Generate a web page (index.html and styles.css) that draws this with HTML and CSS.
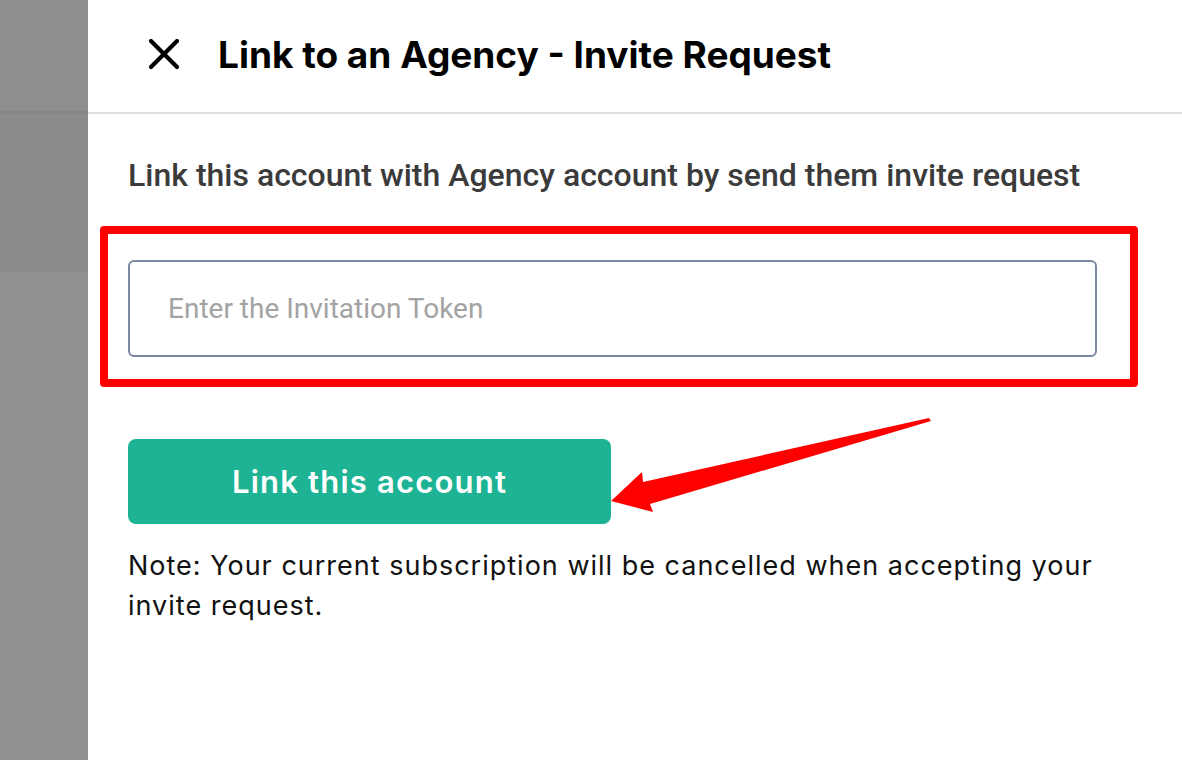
FILE: index.html
```html
<!DOCTYPE html>
<html>
<head>
<meta charset="utf-8">
<link rel="stylesheet" href="styles.css">
</head>
<body>
<div class="page">
  <aside class="backdrop">
    <div class="bd-top"></div>
    <div class="bd-mid"></div>
    <div class="bd-rest"></div>
  </aside>
  <main class="panel">
    <header class="panel-head">
      <button class="close" aria-label="Close">
        <svg width="32" height="32" viewBox="0 0 32 32"><path d="M3 3 L29 29 M29 3 L3 29" stroke="#000" stroke-width="4.2" stroke-linecap="round" fill="none"/></svg>
      </button>
      <h1 class="title">Link to an Agency - Invite Request</h1>
    </header>
    <section class="panel-body">
      <p class="lead">Link this account with Agency account by send them invite request</p>
      <div class="highlight">
        <input class="token" type="text" placeholder="Enter the Invitation Token">
      </div>
      <button class="primary">Link this account</button>
      <p class="note">Note: Your current subscription will be cancelled when accepting your invite request.</p>
    </section>
    <svg class="arrow" width="1182" height="760" viewBox="0 0 1182 760">
      <polygon points="611,501 642,472 643,482 929,418 931,421 650,504 653,512" fill="#ff0000"/>
    </svg>
  </main>
</div>
</body>
</html>
```

FILE: styles.css
```css
* { box-sizing: border-box; }
html, body { margin: 0; padding: 0; background: #fff; }
.page { display: flex; width: 1182px; height: 760px; overflow: hidden; }
.backdrop { width: 88px; flex: none; display: flex; flex-direction: column; }
.bd-top { height: 113px; background: #8e8e8e; border-bottom: 2px solid #858585; flex: none; }
.bd-mid { height: 159px; background: #8b8b8b; flex: none; }
.bd-rest { flex: 1; background: #909090; }
.panel { flex: 1; background: #fff; }
.panel-head { height: 114px; border-bottom: 2px solid #dde1e6; display: flex; align-items: center; padding-left: 58px; gap: 36px; padding-bottom: 4px; }
.close { border: 0; background: none; padding: 0; width: 36px; height: 36px; display: flex; align-items: center; justify-content: center; cursor: pointer; }
.title { margin: 0; font-family: "Inter", sans-serif; font-weight: 700; font-size: 37px; color: #000; letter-spacing: 0; }
.panel-body { padding: 40px 0 0 40px; }
.lead { margin: 0; font-family: "Roboto", sans-serif; font-weight: 500; font-size: 32px; color: #3b3b3b; line-height: 42px; }
.highlight { margin: 30px 0 0 -28px; width: 1038px; border: 8px solid #ff0000; border-radius: 4px; padding: 26px 33px 22px 20px; }
.token { display: block; width: 100%; height: 97px; border: 2px solid #7b89a0; border-radius: 6px; padding: 0 38px; font-family: "Roboto", sans-serif; font-size: 28px; color: #333; outline: none; }
.token::placeholder { color: #a3a3a3; }
.primary { display: block; margin-top: 52px; width: 483px; height: 85px; border: 0; border-radius: 8px; background: #1db394; color: #fff; font-family: "Inter", sans-serif; font-weight: 600; font-size: 31px; letter-spacing: 1.2px; cursor: pointer; }
.note { margin: 22px 0 0; width: 990px; font-family: "Inter", sans-serif; font-size: 27px; letter-spacing: 1px; line-height: 40px; color: #111; }
.arrow { position: absolute; left: 0; top: 0; pointer-events: none; }
```
